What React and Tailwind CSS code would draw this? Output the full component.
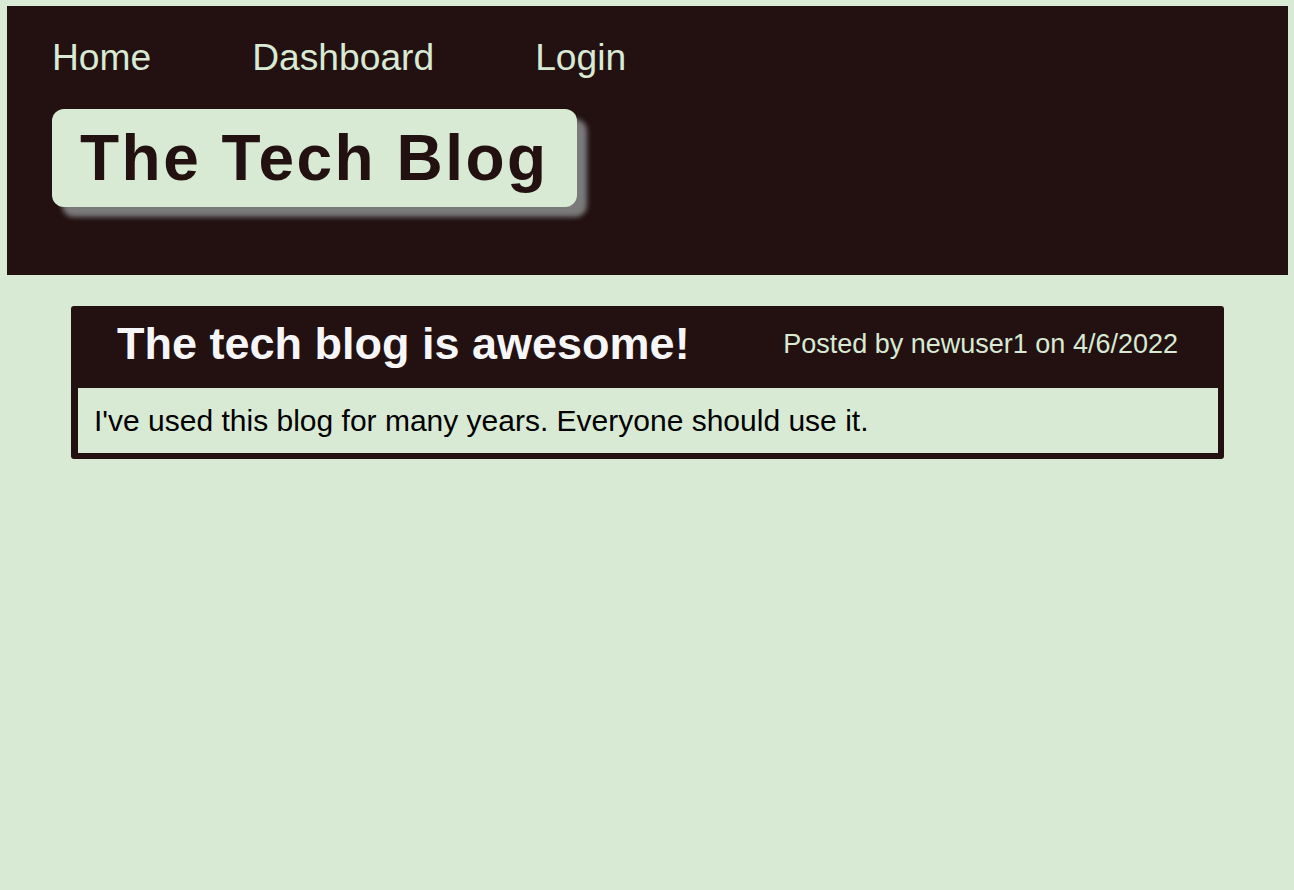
const App = () => {
  const links = ['Home', 'Dashboard', 'Login'];

  return (
    <div
      className="min-h-screen bg-[#d8ead3] pt-[6px] pl-[7px] pr-[6px]"
      style={{ fontFamily: '"Liberation Sans", Arial, sans-serif' }}
    >
      {/* Header */}
      <header className="bg-[#231112] px-[45px] pt-[30px] pb-[68px]">
        <nav className="flex gap-[101px]">
          {links.map((link) => (
            <a key={link} href="#" className="text-[37.2px] leading-[42px] text-[#d8ead3]">
              {link}
            </a>
          ))}
        </nav>
        <div className="mt-[31px] inline-block rounded-xl bg-[#d8ead3] px-[28px] py-[12px] shadow-[10px_10px_5px_#7a7a7a]">
          <h1 className="text-[64px] leading-[74px] font-bold tracking-[2.5px] text-[#231112]">
            The Tech Blog
          </h1>
        </div>
      </header>

      {/* Post */}
      <main className="mx-[64px] mt-[31px]">
        <article className="rounded-[3px] bg-[#231112] pb-[6px]">
          <div className="flex h-[82px] items-center justify-between px-[46px] pb-[6px]">
            <h2 className="text-[45px] leading-[52px] font-bold text-[#f6f6f8]">
              The tech blog is awesome!
            </h2>
            <p className="text-[27px] text-[#d8ead3]">Posted by newuser1 on 4/6/2022</p>
          </div>
          <div className="mx-[7px] mr-[6px] bg-[#d8ead3] px-[16px] py-[15px]">
            <p className="text-[30px] leading-[35px] text-black">
              I've used this blog for many years. Everyone should use it.
            </p>
          </div>
        </article>
      </main>
    </div>
  );
};

export default App;
